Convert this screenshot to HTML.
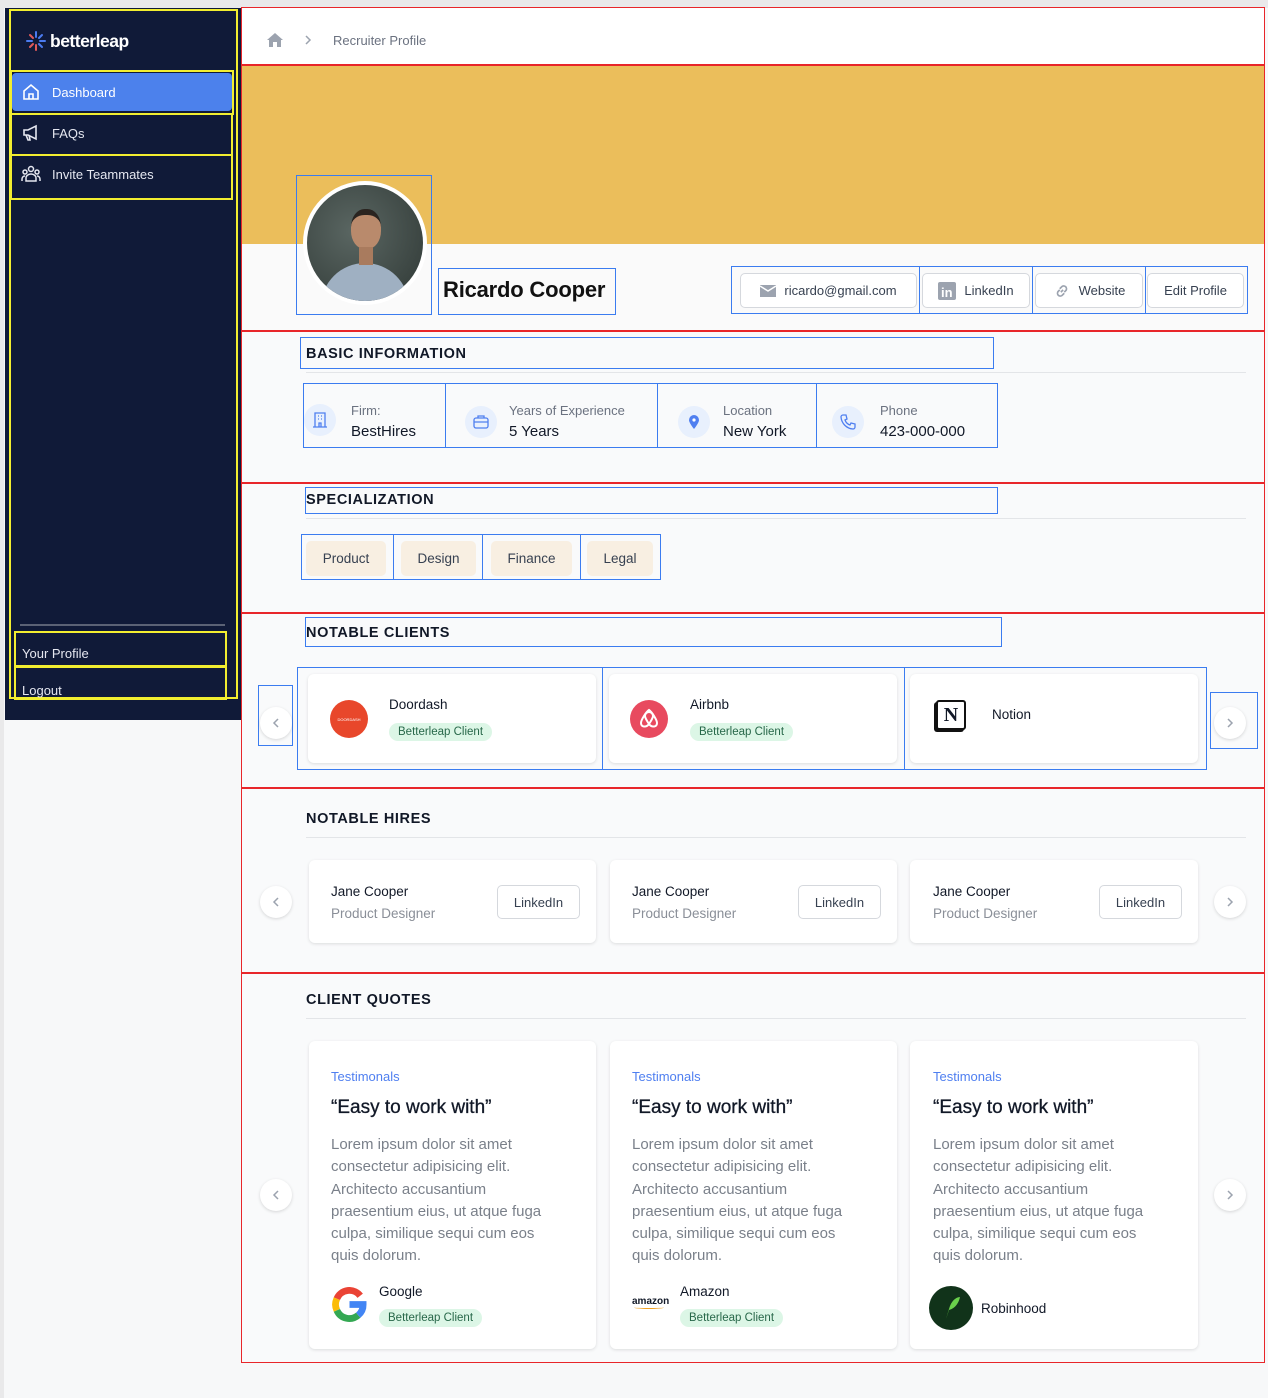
<!DOCTYPE html>
<html><head><meta charset="utf-8"><style>
*{box-sizing:border-box;margin:0;padding:0}
body{width:1268px;height:1398px;position:relative;background:#f7f8f9;font-family:"Liberation Sans",sans-serif;overflow:hidden;color:#111827}
.a{position:absolute}
.yb{border:2px solid #f2ee30}
.bb{border:1px solid #3b7cf0}
.rl{position:absolute;left:241px;width:1023px;height:2px;background:#e8262a}
.nav{color:#e5e7f0;font-size:13px;display:flex;align-items:center}
.sec{font-size:14.5px;font-weight:bold;letter-spacing:.6px;color:#111827}
.hr{position:absolute;height:1px;background:#e3e5e8}
.btn{position:absolute;background:#fff;border:1px solid #d5d8dd;border-radius:5px;font-size:13px;color:#374151;display:flex;align-items:center;justify-content:center;gap:8px}
.ib{position:absolute;width:36px;height:36px;border-radius:50%;background:#e8f0fd;display:flex;align-items:center;justify-content:center}
.lbl{font-size:13px;color:#6b7280}
.val{font-size:15px;color:#111827;margin-top:5px}
.tag{position:absolute;background:#f8efe2;border-radius:5px;font-size:13.5px;color:#374151;display:flex;align-items:center;justify-content:center}
.card{position:absolute;background:#fff;border-radius:6px;box-shadow:0 1px 3px rgba(0,0,0,.12)}
.pill{display:inline-block;background:#dcf6e6;color:#276749;font-size:11.5px;padding:3px 9px;border-radius:10px}
.circ{position:absolute;width:32px;height:32px;border-radius:50%;background:#fff;box-shadow:0 1px 3px rgba(0,0,0,.15);display:flex;align-items:center;justify-content:center}
.q .t{font-size:13px;color:#4f7ff0}
.q .h{font-size:19px;color:#111827;margin-top:13px;-webkit-text-stroke:.3px #111827}
.q .p{font-size:15px;line-height:22.3px;color:#7a808a;margin-top:15px;width:228px}
</style></head><body>
<div class="a" style="left:0;top:0;width:1268px;height:8px;background:#e9e9ea"></div>
<div class="a" style="left:0;top:0;width:4px;height:1398px;background:#e9e9ea"></div>
<!-- sidebar -->
<div class="a" style="left:5px;top:8px;width:236px;height:712px;background:#101a38"></div>
<div class="a yb" style="left:9px;top:9px;width:229px;height:690px"></div>
<div class="a" style="left:25px;top:30px;width:22px;height:22px">
<svg width="22" height="22" viewBox="0 0 22 22"><g stroke-width="2" stroke-linecap="round"><line x1="11" y1="2" x2="11" y2="7" stroke="#4b7bf0"/><line x1="11" y1="15" x2="11" y2="20" stroke="#e05a5a"/><line x1="2" y1="11" x2="7" y2="11" stroke="#4b7bf0"/><line x1="15" y1="11" x2="20" y2="11" stroke="#4b7bf0"/><line x1="5" y1="5" x2="8" y2="8" stroke="#e05a5a"/><line x1="14" y1="14" x2="17" y2="17" stroke="#4b7bf0"/><line x1="17" y1="5" x2="14" y2="8" stroke="#4b7bf0"/><line x1="5" y1="17" x2="8" y2="14" stroke="#e05a5a"/></g></svg></div>
<div class="a" style="left:50px;top:31px;color:#fff;font-size:17.5px;font-weight:bold;letter-spacing:-.5px">betterleap</div>
<div class="a yb" style="left:10px;top:70px;width:224px;height:45px"></div>
<div class="a nav" style="left:12px;top:73px;width:220px;height:38px;background:#4c81ec;border-radius:4px;padding-left:9px;color:#fff"><svg width="20" height="20" viewBox="0 0 20 20" fill="none" stroke="#fff" stroke-width="1.6"><path d="M3 9l7-6 7 6v8H3z M8 17v-5h4v5"/></svg><span style="margin-left:11px">Dashboard</span></div>
<div class="a yb" style="left:10px;top:113px;width:223px;height:43px"></div>
<div class="a nav" style="left:21px;top:121px;height:24px"><svg width="20" height="20" viewBox="0 0 20 20" fill="none" stroke="#e5e7f0" stroke-width="1.6"><path d="M3 7h4l8-4v13l-8-4H3z M5 12l2 5h2l-1-5"/></svg><span style="margin-left:11px">FAQs</span></div>
<div class="a yb" style="left:10px;top:154px;width:223px;height:46px"></div>
<div class="a nav" style="left:21px;top:162px;height:24px"><svg width="20" height="20" viewBox="0 0 20 20" fill="none" stroke="#e5e7f0" stroke-width="1.5"><circle cx="10" cy="5" r="2.5"/><circle cx="4" cy="8" r="2"/><circle cx="16" cy="8" r="2"/><path d="M5 17v-3a5 4 0 0110 0v3z M1 17v-2a3 3 0 013-3 M19 17v-2a3 3 0 00-3-3"/></svg><span style="margin-left:11px">Invite Teammates</span></div>
<div class="a" style="left:20px;top:624px;width:205px;height:2px;background:#5b6275"></div>
<div class="a yb" style="left:14px;top:631px;width:213px;height:36px"></div>
<div class="a nav" style="left:22px;top:646px">Your Profile</div>
<div class="a yb" style="left:14px;top:666px;width:213px;height:34px"></div>
<div class="a nav" style="left:22px;top:683px">Logout</div>
<!-- main -->
<div class="a" style="left:241px;top:7px;width:1024px;height:1356px;border:1px solid #e8262a;background:#f9fafb"></div>
<div class="a" style="left:242px;top:8px;width:1022px;height:56px;background:#fff"></div>
<div class="a" style="left:266px;top:31px"><svg width="18" height="18" viewBox="0 0 18 18"><path d="M9 2L1 9h2v7h4v-5h4v5h4V9h2z" fill="#9ca3af"/></svg></div>
<div class="a" style="left:303px;top:33px"><svg width="10" height="12" viewBox="0 0 10 12" fill="none" stroke="#9ca3af" stroke-width="1.5"><path d="M3 2l4 4-4 4"/></svg></div>
<div class="a" style="left:333px;top:33px;font-size:13px;color:#6b7280">Recruiter Profile</div>
<div class="rl" style="top:64px"></div>
<div class="a" style="left:242px;top:66px;width:1022px;height:178px;background:#ebbe5b"></div>
<div class="a" style="left:242px;top:244px;width:1022px;height:86px;background:#fafafa"></div>
<div class="a bb" style="left:296px;top:175px;width:136px;height:140px"></div>
<div class="a" style="left:303px;top:181px;width:124px;height:124px;border-radius:50%;background:#fff;padding:4px"><div style="width:116px;height:116px;border-radius:50%;overflow:hidden;position:relative;background:radial-gradient(circle at 40% 40%,#5a6662,#2f3835)">
<div style="position:absolute;left:14px;top:78px;width:88px;height:60px;border-radius:44px 44px 0 0;background:#9fb0c2"></div>
<div style="position:absolute;left:44px;top:24px;width:30px;height:40px;border-radius:45%;background:#b98a6c;border-top:6px solid #2a2420"></div>
<div style="position:absolute;left:52px;top:62px;width:14px;height:18px;background:#a97b5e"></div>
</div></div>
<div class="a bb" style="left:438px;top:268px;width:178px;height:47px"></div>
<div class="a" style="left:443px;top:277px;font-size:22px;font-weight:bold;color:#111;letter-spacing:-.2px">Ricardo Cooper</div>
<div class="a bb" style="left:731px;top:266px;width:517px;height:48px"></div>
<div class="a" style="left:919px;top:266px;width:1px;height:48px;background:#3b7cf0"></div>
<div class="a" style="left:1032px;top:266px;width:1px;height:48px;background:#3b7cf0"></div>
<div class="a" style="left:1145px;top:266px;width:1px;height:48px;background:#3b7cf0"></div>
<div class="btn" style="left:740px;top:273px;width:177px;height:35px"><svg width="16" height="12" viewBox="0 0 16 12"><path d="M0 0h16v12H0z" fill="#9ca3af"/><path d="M0 1l8 5 8-5" stroke="#fff" stroke-width="1.4" fill="none"/></svg>ricardo@gmail.com</div>
<div class="btn" style="left:922px;top:273px;width:108px;height:35px"><svg width="18" height="18" viewBox="0 0 18 18"><rect width="18" height="18" rx="2" fill="#9ca3af"/><text x="3" y="15" font-family="Liberation Sans" font-weight="bold" font-size="13" fill="#fff">in</text></svg>LinkedIn</div>
<div class="btn" style="left:1035px;top:273px;width:108px;height:35px"><svg width="18" height="18" viewBox="0 0 16 16" fill="none" stroke="#9ca3af" stroke-width="1.5"><path d="M7 9l2-2 M6 6L8 4a2.5 2.5 0 013.5 3.5L10 9 M10 10l-2 2a2.5 2.5 0 01-3.5-3.5L6 7"/></svg>Website</div>
<div class="btn" style="left:1147px;top:273px;width:97px;height:35px">Edit Profile</div>
<div class="rl" style="top:330px"></div>
<!-- basic info -->
<div class="a bb" style="left:300px;top:337px;width:694px;height:32px"></div>
<div class="a sec" style="left:306px;top:346px">BASIC INFORMATION</div>
<div class="hr" style="left:306px;top:372px;width:940px"></div>
<div class="a bb" style="left:303px;top:383px;width:695px;height:65px"></div>
<div class="a" style="left:445px;top:383px;width:1px;height:65px;background:#3b7cf0"></div>
<div class="a" style="left:657px;top:383px;width:1px;height:65px;background:#3b7cf0"></div>
<div class="a" style="left:816px;top:383px;width:1px;height:65px;background:#3b7cf0"></div>
<div class="ib" style="left:304px;top:404px;width:32px;height:32px"><svg width="14" height="16" viewBox="0 0 14 16" fill="none" stroke="#4f7ff0" stroke-width="1.3"><path d="M2 1h10v14H2z M0 15h14 M5 4h1 M8 4h1 M5 7h1 M8 7h1 M6 15v-4h2v4"/></svg></div>
<div class="a" style="left:351px;top:403px"><div class="lbl">Firm:</div><div class="val">BestHires</div></div>
<div class="ib" style="left:465px;top:406px;width:32px;height:32px"><svg width="16" height="14" viewBox="0 0 16 14" fill="none" stroke="#4f7ff0" stroke-width="1.3"><rect x="1" y="3" width="14" height="10" rx="2"/><path d="M5 3V1h6v2 M1 7h14"/></svg></div>
<div class="a" style="left:509px;top:403px"><div class="lbl">Years of Experience</div><div class="val">5 Years</div></div>
<div class="ib" style="left:678px;top:406px;width:32px;height:32px"><svg width="12" height="14" viewBox="0 0 12 14"><path d="M6 14S1 8 1 5a5 5 0 0110 0c0 3-5 9-5 9z" fill="#4f7ff0"/><circle cx="6" cy="5" r="1.6" fill="#fff"/></svg></div>
<div class="a" style="left:723px;top:403px"><div class="lbl">Location</div><div class="val">New York</div></div>
<div class="ib" style="left:832px;top:406px;width:32px;height:32px"><svg width="16" height="16" viewBox="0 0 16 16" fill="none" stroke="#4f7ff0" stroke-width="1.3"><path d="M3 1h3l1 4-2 1a8 8 0 005 5l1-2 4 1v3a2 2 0 01-2 2A13 13 0 011 3a2 2 0 012-2z"/></svg></div>
<div class="a" style="left:880px;top:403px"><div class="lbl">Phone</div><div class="val">423-000-000</div></div>
<div class="rl" style="top:482px"></div>
<!-- specialization -->
<div class="a bb" style="left:305px;top:487px;width:693px;height:27px"></div>
<div class="a sec" style="left:306px;top:492px">SPECIALIZATION</div>
<div class="hr" style="left:306px;top:518px;width:940px"></div>
<div class="a bb" style="left:301px;top:534px;width:360px;height:46px"></div>
<div class="a" style="left:393px;top:534px;width:1px;height:46px;background:#3b7cf0"></div>
<div class="a" style="left:482px;top:534px;width:1px;height:46px;background:#3b7cf0"></div>
<div class="a" style="left:580px;top:534px;width:1px;height:46px;background:#3b7cf0"></div>
<div class="tag" style="left:306px;top:541px;width:80px;height:35px">Product</div>
<div class="tag" style="left:401px;top:541px;width:75px;height:35px">Design</div>
<div class="tag" style="left:491px;top:541px;width:81px;height:35px">Finance</div>
<div class="tag" style="left:587px;top:541px;width:66px;height:35px">Legal</div>
<div class="rl" style="top:612px"></div>
<!-- notable clients -->
<div class="a bb" style="left:305px;top:617px;width:697px;height:30px"></div>
<div class="a sec" style="left:306px;top:625px">NOTABLE CLIENTS</div>
<div class="a bb" style="left:258px;top:685px;width:35px;height:61px"></div>
<div class="circ" style="left:260px;top:707px"><svg width="10" height="12" viewBox="0 0 10 12" fill="none" stroke="#9ca3af" stroke-width="1.5"><path d="M7 2L3 6l4 4"/></svg></div>
<div class="a bb" style="left:297px;top:667px;width:910px;height:103px"></div>
<div class="a" style="left:602px;top:667px;width:1px;height:103px;background:#3b7cf0"></div>
<div class="a" style="left:904px;top:667px;width:1px;height:103px;background:#3b7cf0"></div>
<div class="a bb" style="left:1210px;top:692px;width:48px;height:57px"></div>
<div class="circ" style="left:1214px;top:707px"><svg width="10" height="12" viewBox="0 0 10 12" fill="none" stroke="#9ca3af" stroke-width="1.5"><path d="M3 2l4 4-4 4"/></svg></div>
<div class="card" style="left:308px;top:674px;width:288px;height:89px"></div>
<div class="a" style="left:330px;top:700px;width:38px;height:38px;border-radius:50%;background:#e8472b;color:#fff;font-size:4px;display:flex;align-items:center;justify-content:center">DOORDASH</div>
<div class="a" style="left:389px;top:697px;font-size:13.5px">Doordash</div>
<div class="a" style="left:389px;top:722px"><span class="pill">Betterleap Client</span></div>
<div class="card" style="left:609px;top:674px;width:288px;height:89px"></div>
<div class="a" style="left:630px;top:700px;width:38px;height:38px;border-radius:50%;background:#e84a5f;display:flex;align-items:center;justify-content:center"><svg width="22" height="24" viewBox="0 0 22 24" fill="none" stroke="#fff" stroke-width="2"><path d="M11 17c-2-3-4-6-4-8a4 4 0 018 0c0 2-2 5-4 8z M11 17c-3 4-8 3-8-1 0-3 5-11 8-13 3 2 8 10 8 13 0 4-5 5-8 1z"/></svg></div>
<div class="a" style="left:690px;top:697px;font-size:13.5px">Airbnb</div>
<div class="a" style="left:690px;top:722px"><span class="pill">Betterleap Client</span></div>
<div class="card" style="left:910px;top:674px;width:288px;height:89px"></div>
<div class="a" style="left:936px;top:700px;width:30px;height:30px;border:2.5px solid #111;border-radius:3px;background:#fff;font-family:'Liberation Serif',serif;font-weight:bold;font-size:20px;display:flex;align-items:center;justify-content:center;box-shadow:-2px 2px 0 #111">N</div>
<div class="a" style="left:992px;top:707px;font-size:13.5px">Notion</div>
<div class="rl" style="top:787px"></div>
<!-- notable hires -->
<div class="a sec" style="left:306px;top:811px">NOTABLE HIRES</div>
<div class="hr" style="left:306px;top:837px;width:940px"></div>
<div class="circ" style="left:260px;top:886px"><svg width="10" height="12" viewBox="0 0 10 12" fill="none" stroke="#9ca3af" stroke-width="1.5"><path d="M7 2L3 6l4 4"/></svg></div>
<div class="circ" style="left:1214px;top:886px"><svg width="10" height="12" viewBox="0 0 10 12" fill="none" stroke="#9ca3af" stroke-width="1.5"><path d="M3 2l4 4-4 4"/></svg></div>
<div class="card" style="left:309px;top:860px;width:287px;height:83px"></div>
<div class="a" style="left:331px;top:884px;font-size:13.5px">Jane Cooper</div><div class="a" style="left:331px;top:906px;font-size:13.5px;color:#8a8f98">Product Designer</div>
<div class="btn" style="left:497px;top:885px;width:83px;height:34px">LinkedIn</div>
<div class="card" style="left:610px;top:860px;width:287px;height:83px"></div>
<div class="a" style="left:632px;top:884px;font-size:13.5px">Jane Cooper</div><div class="a" style="left:632px;top:906px;font-size:13.5px;color:#8a8f98">Product Designer</div>
<div class="btn" style="left:798px;top:885px;width:83px;height:34px">LinkedIn</div>
<div class="card" style="left:910px;top:860px;width:288px;height:83px"></div>
<div class="a" style="left:933px;top:884px;font-size:13.5px">Jane Cooper</div><div class="a" style="left:933px;top:906px;font-size:13.5px;color:#8a8f98">Product Designer</div>
<div class="btn" style="left:1099px;top:885px;width:83px;height:34px">LinkedIn</div>
<div class="rl" style="top:972px"></div>
<!-- quotes -->
<div class="a sec" style="left:306px;top:992px">CLIENT QUOTES</div>
<div class="hr" style="left:306px;top:1018px;width:940px"></div>
<div class="circ" style="left:260px;top:1179px"><svg width="10" height="12" viewBox="0 0 10 12" fill="none" stroke="#9ca3af" stroke-width="1.5"><path d="M7 2L3 6l4 4"/></svg></div>
<div class="circ" style="left:1214px;top:1179px"><svg width="10" height="12" viewBox="0 0 10 12" fill="none" stroke="#9ca3af" stroke-width="1.5"><path d="M3 2l4 4-4 4"/></svg></div>

<div class="card" style="left:309px;top:1041px;width:287px;height:308px"></div>
<div class="a q" style="left:331px;top:1069px;width:250px"><div class="t">Testimonals</div><div class="h">“Easy to work with”</div><div class="p">Lorem ipsum dolor sit amet consectetur adipisicing elit. Architecto accusantium praesentium eius, ut atque fuga culpa, similique sequi cum eos quis dolorum.</div></div>
<div class="a" style="left:332px;top:1287px"><svg width="35" height="35" viewBox="0 0 36 36" fill="none" stroke-width="7"><path d="M29 9A14 14 0 005 12" stroke="#ea4335"/><path d="M5 12a14 14 0 000 12" stroke="#fbbc05"/><path d="M5 24a14 14 0 0022 5" stroke="#34a853"/><path d="M27 29a14 14 0 005-11H18" stroke="#4285f4"/></svg></div>
<div class="a" style="left:379px;top:1284px;font-size:13.5px">Google</div>
<div class="a" style="left:379px;top:1308px"><span class="pill">Betterleap Client</span></div>

<div class="card" style="left:610px;top:1041px;width:287px;height:308px"></div>
<div class="a q" style="left:632px;top:1069px;width:250px"><div class="t">Testimonals</div><div class="h">“Easy to work with”</div><div class="p">Lorem ipsum dolor sit amet consectetur adipisicing elit. Architecto accusantium praesentium eius, ut atque fuga culpa, similique sequi cum eos quis dolorum.</div></div>
<div class="a" style="left:632px;top:1296px;font-size:10px;font-weight:bold">amazon</div>
<div class="a" style="left:634px;top:1306px;width:30px;height:3px;border-bottom:1.5px solid #f0a020;border-radius:0 0 50% 50%"></div>
<div class="a" style="left:680px;top:1284px;font-size:13.5px">Amazon</div>
<div class="a" style="left:680px;top:1308px"><span class="pill">Betterleap Client</span></div>

<div class="card" style="left:910px;top:1041px;width:288px;height:308px"></div>
<div class="a q" style="left:933px;top:1069px;width:250px"><div class="t">Testimonals</div><div class="h">“Easy to work with”</div><div class="p">Lorem ipsum dolor sit amet consectetur adipisicing elit. Architecto accusantium praesentium eius, ut atque fuga culpa, similique sequi cum eos quis dolorum.</div></div>
<div class="a" style="left:929px;top:1286px;width:44px;height:44px;border-radius:50%;background:#11331a;display:flex;align-items:center;justify-content:center"><svg width="22" height="26" viewBox="0 0 22 26"><path d="M6 24l3-10C11 6 16 2 20 2c-1 5-4 11-11 13z" fill="#6ad14b"/></svg></div>
<div class="a" style="left:981px;top:1301px;font-size:13.5px">Robinhood</div>
</body></html>
